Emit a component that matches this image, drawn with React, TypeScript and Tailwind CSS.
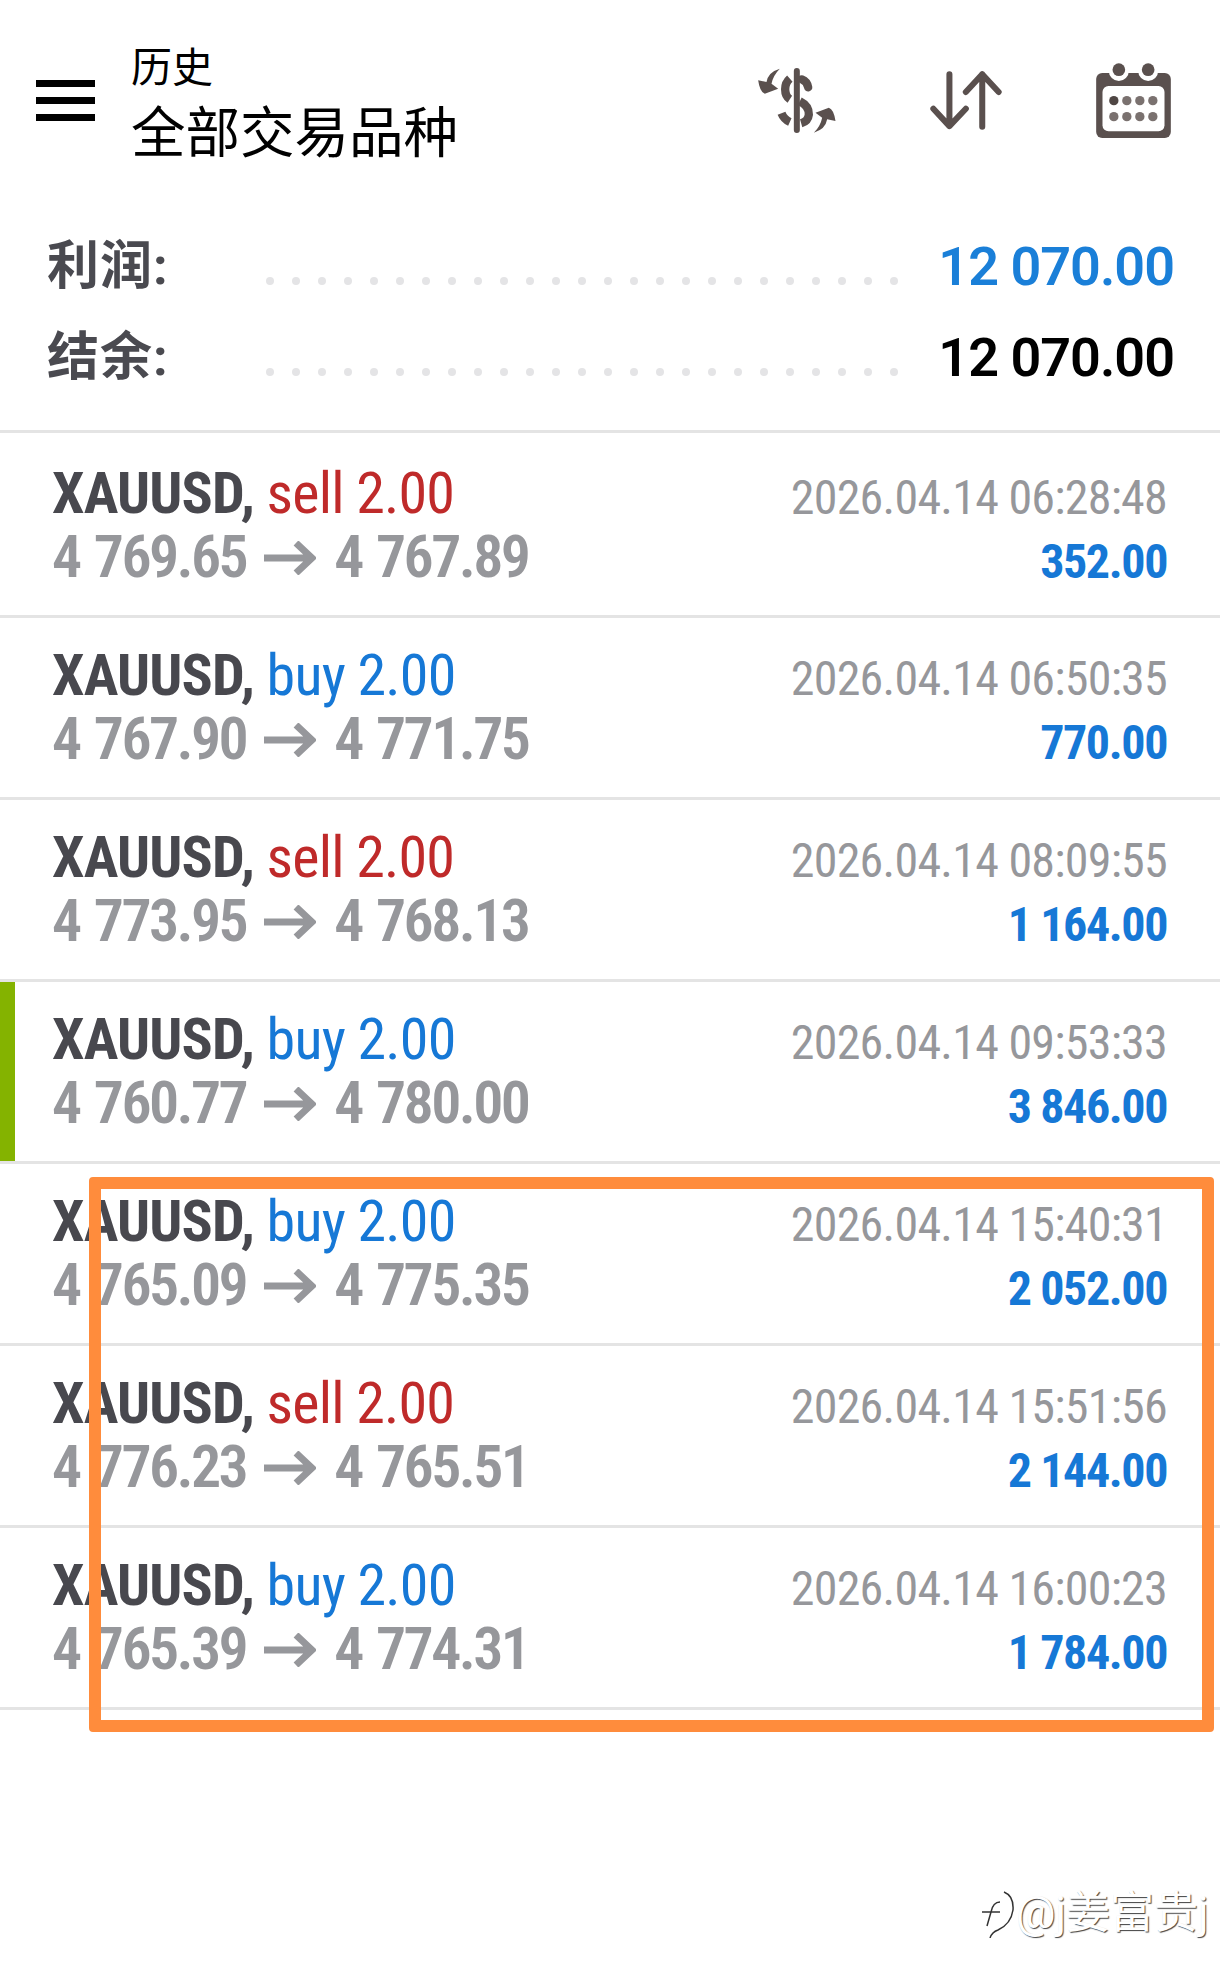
import React from "react";

type Deal = {
  side: "buy" | "sell";
  open: string;
  close: string;
  time: string;
  profit: string;
  active?: boolean;
};

const deals: Deal[] = [
  { side: "sell", open: "4 769.65", close: "4 767.89", time: "2026.04.14 06:28:48", profit: "352.00" },
  { side: "buy", open: "4 767.90", close: "4 771.75", time: "2026.04.14 06:50:35", profit: "770.00" },
  { side: "sell", open: "4 773.95", close: "4 768.13", time: "2026.04.14 08:09:55", profit: "1 164.00" },
  { side: "buy", open: "4 760.77", close: "4 780.00", time: "2026.04.14 09:53:33", profit: "3 846.00", active: true },
  { side: "buy", open: "4 765.09", close: "4 775.35", time: "2026.04.14 15:40:31", profit: "2 052.00" },
  { side: "sell", open: "4 776.23", close: "4 765.51", time: "2026.04.14 15:51:56", profit: "2 144.00" },
  { side: "buy", open: "4 765.39", close: "4 774.31", time: "2026.04.14 16:00:23", profit: "1 784.00" },
];

const ICON = "#5a504e";

const DollarIcon = () => (
  <svg width="78" height="65" viewBox="175 118 233 195" fill="none">
    <rect x="282" y="118" width="18" height="195" rx="9" fill={ICON} />
    <g stroke={ICON} strokeWidth="25" strokeLinecap="round">
      <path d="M306 152 Q322 158 325 176" />
      <path d="M270 150 Q256 162 256 182 Q256 203 270 212" strokeLinecap="butt" />
      <path d="M300 218 Q328 232 327 258 Q325 278 304 284" strokeLinecap="butt" />
      <path d="M245 254 Q252 272 270 280" strokeLinecap="butt" />
    </g>
    <path d="M240 120 Q205 130 200 160 L175 155 Q180 190 195 195 L235 180 L215 165 Q220 140 240 120 Z" fill={ICON} />
    <path d="M342 312 Q377 302 382 272 L407 277 Q402 242 387 237 L347 252 L367 267 Q362 292 342 312 Z" fill={ICON} />
  </svg>
);

const SortIcon = () => (
  <svg width="72" height="59" viewBox="690 128 215 175" fill="none" stroke={ICON} strokeWidth="18" strokeLinecap="round" strokeLinejoin="round">
    <path d="M748 137 V292 M700 240 L748 292 L797 240" />
    <path d="M846 294 V137 M797 190 L846 137 L895 190" />
  </svg>
);

const CalendarIcon = () => (
  <svg width="75" height="75" viewBox="1188 98 224 225">
    <rect x="1188" y="128" width="224" height="195" rx="18" fill={ICON} />
    <rect x="1207" y="167" width="186" height="136" rx="18" fill="#fff" />
    <circle cx="1256" cy="122" r="30" fill="#fff" />
    <circle cx="1344" cy="122" r="30" fill="#fff" />
    <circle cx="1256" cy="118" r="19" fill={ICON} />
    <circle cx="1344" cy="118" r="19" fill={ICON} />
    {[211, 259].map((y) =>
      [1241, 1280, 1319, 1358].map((x) => (
        <circle key={`${x}-${y}`} cx={x} cy={y} r="14" fill={x === 1241 && y === 211 ? "#4f4644" : "#7a716f"} />
      )),
    )}
  </svg>
);

const PriceArrow = () => (
  <svg width="52" height="34" viewBox="0 0 52 34" fill="none" stroke="#96979b" strokeWidth="7" className="mt-[2px]">
    <path d="M0 17 H48 M32 2 L48 17 L32 32" />
  </svg>
);

// dotted filler between a summary label and its value
const Dots = () => (
  <div className="flex gap-[18px] ml-[95px] mt-[28px]">
    {Array.from({ length: 25 }).map((_, i) => (
      <span key={i} className="w-[8px] h-[8px] rounded-full bg-[#e4e4e6]" />
    ))}
  </div>
);

const SummaryRow = ({ label, value, color }: { label: string; value: string; color: string }) => (
  <div className="flex items-center h-[91px]">
    <span className="w-[124px] text-[52px] leading-none font-bold tracking-[1px] text-[#4a4a50]">{label}</span>
    <Dots />
    <span className={`ml-auto text-[54px] leading-none font-semibold tracking-[-1px] ${color}`}>{value}</span>
  </div>
);

export default function App() {
  return (
    <div className="relative w-[1220px] h-[1984px] bg-white overflow-hidden [font-family:Roboto,'Noto_Sans_CJK_SC',sans-serif]">
      <header className="flex items-center h-[200px] pl-[36px] pr-[49px]">
        <div className="flex flex-col gap-[10px] w-[59px]">
          <span className="h-[7px] bg-black" />
          <span className="h-[7px] bg-black" />
          <span className="h-[7px] bg-black" />
        </div>
        <div className="ml-[36px] pt-[6px] text-black">
          <div className="text-[41px] leading-[50px]">历史</div>
          <div className="mt-[9px] text-[54.5px] leading-[62px]">全部交易品种</div>
        </div>
        <div className="ml-auto flex items-center gap-[94px]">
          <DollarIcon />
          <SortIcon />
          <CalendarIcon />
        </div>
      </header>

      <section className="h-[233px] pt-[21px] pl-[47px] pr-[46px] border-b-[3px] border-[#e4e4e4]">
        <SummaryRow label="利润:" value="12 070.00" color="text-[#1a7fd8]" />
        <SummaryRow label="结余:" value="12 070.00" color="text-black" />
      </section>

      <div>
        {deals.map((d, i) => (
          <div
            key={d.time}
            className={`relative flex justify-between pl-[52px] pr-[53px] border-b-[3px] border-[#e4e4e4] ${i === 0 ? "h-[185px] pt-[28px]" : "h-[182px] pt-[25px]"}`}
          >
            {d.active && <span className="absolute left-0 top-0 bottom-0 w-[15px] bg-[#84b300]" />}
            <div className="font-stretch-[75%]">
              <div className="text-[58px] leading-[64px] tracking-[-0.8px]">
                <span className="font-bold text-[#48484e]">XAUUSD, </span>
                <span className={d.side === "buy" ? "text-[#1678d6]" : "text-[#bf2a2a]"}>{d.side} 2.00</span>
              </div>
              <div className="flex items-center gap-[18px] text-[60px] leading-[64px] font-semibold tracking-[-2.6px] [word-spacing:3px] text-[#96979b]">
                <span>{d.open}</span>
                <PriceArrow />
                <span>{d.close}</span>
              </div>
            </div>
            <div className={`text-right font-stretch-[75%] ${i === 0 ? "pt-[5px]" : "pt-[4px]"}`}>
              <div className="text-[48px] leading-[64px] tracking-[-0.75px] text-[#96979b]">{d.time}</div>
              <div className="text-[48px] leading-[64px] tracking-[-1.4px] font-bold text-[#1678d6]">{d.profit}</div>
            </div>
          </div>
        ))}
      </div>

      {/* hand-drawn highlight over the last three deals */}
      <div className="absolute left-[89px] top-[1177px] w-[1125px] h-[555px] border-[12px] border-[#ff8c3c] rounded-[4px]" />

      {/* embossed watermark */}
      <div className="absolute left-[980px] top-[1888px] flex items-center text-[44px] leading-none text-white [text-shadow:1px_1px_1px_rgba(0,0,0,0.75)]">
        <svg width="36" height="50" viewBox="0 0 36 50" fill="none" stroke="#333" strokeWidth="1.5">
          <path d="M24 4 Q34 8 33 22 Q31 36 18 42 Q12 44 10 50" />
          <path d="M20 14 Q13 14 11 24 L7 38 M2 24 H20" />
        </svg>
        <span>@j姜富贵j</span>
      </div>
    </div>
  );
}
